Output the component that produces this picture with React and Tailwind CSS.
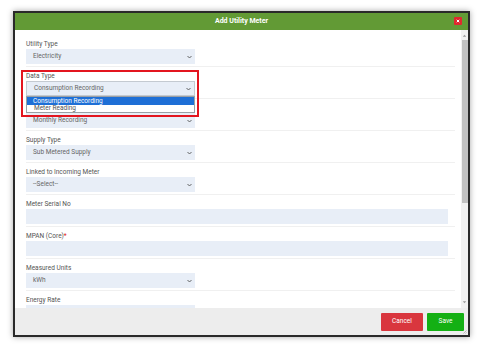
import { useState } from 'react';

const Chevron = () => (
  <svg width="5" height="4" viewBox="0 0 10 8" className="shrink-0">
    <path d="M1 2l4 4 4-4" fill="none" stroke="#555" strokeWidth="1.8" />
  </svg>
);

const SelectBox = ({ value, open }) => (
  <div
    className={`mt-px flex h-[15px] w-[169px] items-center justify-between bg-[#e8eef7] pl-[7px] pr-[3px] text-[6.5px] text-[#666] ${open ? 'border border-[#c4cad1]' : ''}`}
  >
    <span>{value}</span>
    <Chevron />
  </div>
);

const TextBox = () => <div className="mt-px h-[15px] w-full bg-[#e8eef7]" />;

const Row = ({ label, required, children, last }) => (
  <div className={`pr-[7px] pt-[5px] pb-[2px] ${last ? '' : 'border-b border-[#f0f0f0]'}`}>
    <div className="h-[8px] text-[6.5px] leading-[8px] text-[#555]">
      {label}
      {required && <span className="text-[#e02020]">*</span>}
    </div>
    {children}
  </div>
);

export default function App() {
  const [dataType] = useState('Consumption Recording');

  return (
    <div className="h-[348px] w-[484px] bg-white pl-[13px] pt-[11px] font-['Roboto',sans-serif]">
      <div className="flex h-[326px] w-[457px] flex-col border-2 border-[#2a2a2a] bg-white shadow-[0_0_6px_rgba(0,0,0,0.35)]">
        {/* header */}
        <div className="relative flex h-[17px] shrink-0 items-center justify-center bg-[#629a35]">
          <span className="text-[7px] font-bold text-white">Add Utility Meter</span>
          <div className="absolute right-[6px] top-[4px] flex h-[8px] w-[8px] items-center justify-center rounded-[1px] bg-[#e0282e]">
            <svg width="4" height="4" viewBox="0 0 8 8">
              <path d="M1.5 1.5l5 5M6.5 1.5l-5 5" stroke="#fff" strokeWidth="2" />
            </svg>
          </div>
        </div>

        {/* body */}
        <div className="flex h-[278px] shrink-0 overflow-hidden">
          <div className="relative flex-1 overflow-hidden pl-[11px] pr-[6px] pt-[5px]">
            <Row label="Utility Type">
              <SelectBox value="Electricity" />
            </Row>
            <Row label="Data Type">
              <SelectBox value={dataType} open />
            </Row>
            {/* label of this row sits under the open list */}
            <Row label="">
              <SelectBox value="Monthly Recording" />
            </Row>
            <Row label="Supply Type">
              <SelectBox value="Sub Metered Supply" />
            </Row>
            <Row label="Linked to Incoming Meter">
              <SelectBox value="--Select--" />
            </Row>
            <Row label="Meter Serial No">
              <TextBox />
            </Row>
            <Row label="MPAN (Core)" required>
              <TextBox />
            </Row>
            <Row label="Measured Units">
              <SelectBox value="kWh" />
            </Row>
            <Row label="Energy Rate" last>
              <div className="mt-px h-[15px] w-[169px] bg-[#e8eef7]" />
            </Row>

            {/* open dropdown list */}
            <div className="absolute left-[11px] top-[66px] w-[169px] border border-[#9aa0a6] bg-white text-[6.5px]">
              <div className="h-[8px] bg-[#1e6fd6] pl-[6px] leading-[8px] text-white">Consumption Recording</div>
              <div className="h-[7px] pl-[7px] leading-[7px] text-[#555]">Meter Reading</div>
            </div>

            {/* highlight box */}
            <div className="pointer-events-none absolute left-[6px] top-[40px] h-[47px] w-[178px] border-2 border-[#e3151f]" />
          </div>

          {/* scrollbar */}
          <div className="flex w-[7px] shrink-0 flex-col items-center bg-[#f1f1f1]">
            <svg width="5" height="6" viewBox="0 0 6 6" className="mt-[3px]">
              <path d="M1 4l2-2.5 2 2.5z" fill="#999" />
            </svg>
            <div className="mt-[1px] h-[163px] w-[6px] bg-[#c1c1c1]" />
            <div className="flex-1" />
            <svg width="5" height="6" viewBox="0 0 6 6" className="mb-[3px]">
              <path d="M1 2l2 2.5 2-2.5z" fill="#999" />
            </svg>
          </div>
        </div>

        {/* footer */}
        <div className="relative flex flex-1 items-center justify-end gap-[4px] bg-[#ededed] pr-[4px]">
          <button className="h-[18px] w-[42px] rounded-[1px] bg-[#d9363e] text-[6.5px] text-white">Cancel</button>
          <button className="h-[18px] w-[37px] rounded-[1px] bg-[#14b014] text-[6.5px] text-white">Save</button>
          <svg width="5" height="5" viewBox="0 0 5 5" className="absolute bottom-[1px] right-[1px]">
            <path d="M4.5 1.5L1.5 4.5M4.5 3.5L3.5 4.5" stroke="#999" strokeWidth="0.6" />
          </svg>
        </div>
      </div>
    </div>
  );
}
